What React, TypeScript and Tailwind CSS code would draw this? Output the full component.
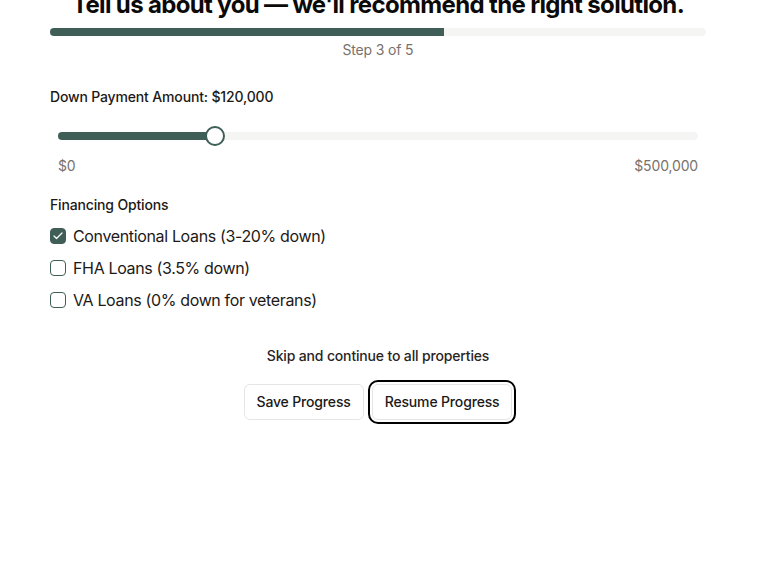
import React, { useState } from 'react';
import { Check } from 'lucide-react';

const MAX = 500000;

const options = [
  { id: 'conventional', label: 'Conventional Loans (3-20% down)' },
  { id: 'fha', label: 'FHA Loans (3.5% down)' },
  { id: 'va', label: 'VA Loans (0% down for veterans)' },
];

function formatMoney(n: number) {
  return '$' + n.toLocaleString('en-US');
}

export default function App() {
  const [amount] = useState(120000);
  const [selected, setSelected] = useState<string[]>(['conventional']);

  const pct = amount / MAX;

  const toggle = (id: string) => {
    setSelected((prev) => (prev.includes(id) ? prev.filter((x) => x !== id) : [...prev, id]));
  };

  return (
    <div className="min-h-screen bg-white text-stone-900 font-['Inter',sans-serif] tracking-[-0.01em] overflow-hidden">
      <div className="ml-[50px] w-[656px]">
        {/* header + progress */}
        <h1 className="-mt-[11px] text-center text-2xl leading-8 font-bold tracking-[-0.027em] text-stone-950 whitespace-nowrap">
          Tell us about you — we'll recommend the right solution.
        </h1>
        <div className="mt-[7px] h-2 w-full rounded-full bg-stone-100 overflow-hidden">
          <div className="h-full w-[60%] bg-[#3f5e57]" />
        </div>
        <p className="mt-1 text-center text-sm leading-5 text-stone-500">Step 3 of 5</p>

        {/* down payment slider */}
        <label className="block mt-[27px] text-sm leading-5 font-medium">
          Down Payment Amount: {formatMoney(amount)}
        </label>
        <div className="mt-[19px] px-2">
          <div className="relative h-5 flex items-center">
            <div className="h-2 w-full rounded-full bg-stone-100 overflow-hidden">
              <div className="h-full bg-[#3f5e57]" style={{ width: `${pct * 100}%` }} />
            </div>
            <div
              className="absolute top-0 h-5 w-5 -ml-[10px] rounded-full border-2 border-[#3f5e57] bg-white"
              style={{ left: `calc(${pct * 100}% + 3px)` }}
            />
          </div>
          <div className="mt-[10px] flex justify-between text-sm leading-5 text-stone-500">
            <span>$0</span>
            <span>{formatMoney(MAX)}</span>
          </div>
        </div>

        {/* financing options */}
        <p className="mt-[19px] text-sm leading-5 font-medium">Financing Options</p>
        <div className="mt-[9px] space-y-2">
          {options.map((o) => {
            const on = selected.includes(o.id);
            return (
              <label key={o.id} className="flex items-center gap-[7px] cursor-pointer" onClick={() => toggle(o.id)}>
                <span
                  className={
                    on
                      ? 'flex h-4 w-4 items-center justify-center rounded-[4px] border border-[#3f5e57] bg-[#3f5e57]'
                      : 'flex h-4 w-4 items-center justify-center rounded-[4px] border border-[#3f5e57] bg-white'
                  }
                >
                  {on && <Check className="h-3 w-3 text-white" strokeWidth={2.5} />}
                </span>
                <span className="text-base leading-6 tracking-[-0.022em]">{o.label}</span>
              </label>
            );
          })}
        </div>

        {/* actions */}
        <p className="mt-[34px] text-center text-sm leading-5 font-medium text-stone-800">
          Skip and continue to all properties
        </p>
        <div className="mt-[18px] flex justify-center gap-2">
          <button className="rounded-md border border-stone-200 bg-white px-3 py-[7px] text-sm leading-5 font-medium text-stone-900">
            Save Progress
          </button>
          <button className="rounded-md border border-stone-200 bg-white px-3 py-[7px] text-sm leading-5 font-medium text-stone-900 outline-2 outline-offset-2 outline-black">
            Resume Progress
          </button>
        </div>
      </div>
    </div>
  );
}
